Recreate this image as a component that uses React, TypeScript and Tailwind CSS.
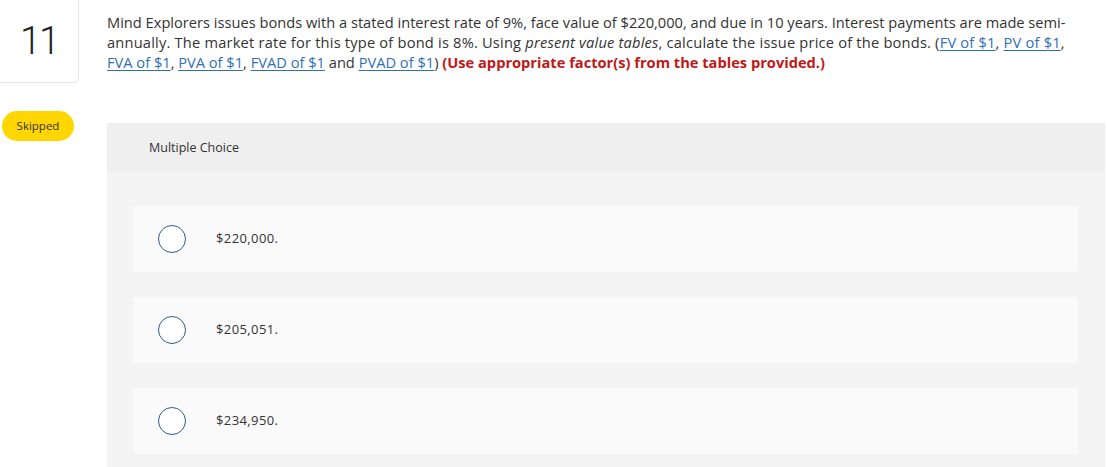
import React from "react";

const Link = ({ children }: { children: React.ReactNode }) => (
  <a className="text-[#2f6fba] underline underline-offset-2 decoration-1">{children}</a>
);

const Option = ({ label }: { label: string }) => (
  <div className="h-[66px] bg-[#fafafa] rounded-[3px] flex items-center pl-[25px]">
    <div className="w-[28px] h-[28px] rounded-full border-[1.5px] border-[#2a5d8f] bg-white shrink-0" />
    <span className="ml-[30px] text-[13px] tracking-[0.4px] text-[#333]">{label}</span>
  </div>
);

export default function App() {
  return (
    <div
      className="w-[1107px] h-[467px] bg-white flex overflow-hidden"
      style={{ fontFamily: "'Open Sans', Lato, sans-serif" }}
    >
      <div className="w-[107px] shrink-0 flex flex-col">
        <div className="w-[79px] h-[83px] border-r border-b border-[#e6e6e6] rounded-br-[5px] flex items-center justify-center">
          <span className="text-[38px] font-light text-[#222] leading-none tracking-[-2px]" style={{ fontFamily: "Roboto, sans-serif" }}>11</span>
        </div>
        <div className="mt-[28px] ml-[2px] w-[72px] h-[30px] rounded-full bg-[#ffd600] flex items-center justify-center text-[11.5px] text-[#333]">
          Skipped
        </div>
      </div>
      <div className="flex-1 pr-[2px]">
        <div className="pt-[12px] text-[14.65px] leading-[20px] text-[#333] whitespace-nowrap">
          <div>
            Mind Explorers issues bonds with a stated interest rate of 9%, face value of $220,000, and due in 10 years. Interest payments are made semi-
          </div>
          <div className="tracking-[0.2px]">
            annually. The market rate for this type of bond is 8%. Using <i>present value tables</i>, calculate the issue price of the bonds. (<Link>FV of $1</Link>, <Link>PV of $1</Link>,
          </div>
          <div>
            <Link>FVA of $1</Link>, <Link>PVA of $1</Link>, <Link>FVAD of $1</Link> and <Link>PVAD of $1</Link>){" "}
            <b className="text-[#c01818]">(Use appropriate factor(s) from the tables provided.)</b>
          </div>
        </div>
        <div className="mt-[51px] bg-[#f4f4f4]">
          <div className="h-[50px] bg-[#efefef] flex items-center pl-[42px] text-[12.5px] text-[#333]">
            Multiple Choice
          </div>
          <div className="pt-[33px] pl-[26px] pr-[27px] pb-[20px] flex flex-col gap-[25px]">
            <Option label="$220,000." />
            <Option label="$205,051." />
            <Option label="$234,950." />
          </div>
        </div>
      </div>
    </div>
  );
}
